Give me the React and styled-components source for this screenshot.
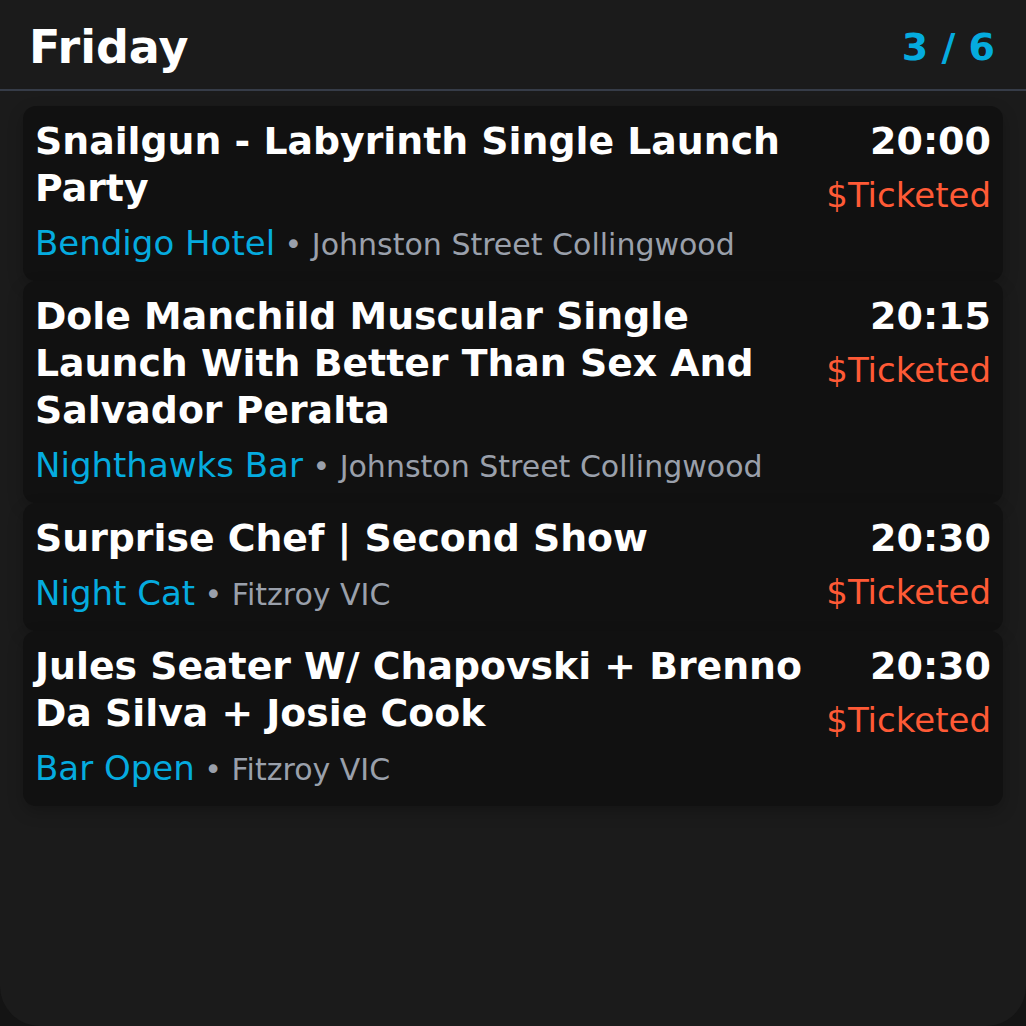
import React from "react";
import styled, { createGlobalStyle } from "styled-components";

const Global = createGlobalStyle`
  html, body { margin: 0; padding: 0; background: #141414; }
  body { font-family: "DejaVu Sans", "Liberation Sans", sans-serif; }
`;

const Screen = styled.div`
  width: 1026px;
  height: 1026px;
  box-sizing: border-box;
  background: #1b1b1b;
  border-radius: 0 0 40px 40px;
  overflow: hidden;
  display: flex;
  flex-direction: column;
`;

const Header = styled.header`
  height: 91px;
  flex-shrink: 0;
  display: flex;
  align-items: center;
  justify-content: space-between;
  padding: 4px 31px 0 29px;
  box-sizing: border-box;
  border-bottom: 2px solid #363c48;
`;

const Day = styled.h1`
  margin: 0;
  font-size: 46px;
  font-weight: 700;
  color: #ffffff;
`;

const Counter = styled.div`
  font-size: 38px;
  font-weight: 700;
  color: #05abdf;
`;

const List = styled.div`
  display: flex;
  flex-direction: column;
  padding: 15px 23px 0;
`;

const Card = styled.article`
  display: flex;
  gap: 16px;
  padding: 12px;
  background: #111111;
  border-radius: 13px;
  box-shadow: 0 6px 16px rgba(0, 0, 0, 0.22);
`;

const Main = styled.div`
  flex: 1;
  min-width: 0;
`;

const Title = styled.div`
  font-size: 37.8px;
  font-weight: 700;
  line-height: 47px;
  color: #ffffff;
`;

const Meta = styled.div`
  margin-top: 6px;
  line-height: 1.5;
  font-size: 34px;
`;

const Venue = styled.span`
  color: #05abdf;
`;

const Place = styled.span`
  font-size: 30px;
  color: #9aa0ab;
`;

const Side = styled.div`
  display: flex;
  flex-direction: column;
  align-items: flex-end;
  flex-shrink: 0;
`;

const Time = styled.div`
  font-size: 38px;
  font-weight: 700;
  line-height: 47px;
  color: #ffffff;
`;

const Price = styled.div`
  margin-top: 5px;
  font-size: 34px;
  line-height: 1.5;
  color: #ff5a36;
`;

const events = [
  {
    title: "Snailgun - Labyrinth Single Launch Party",
    venue: "Bendigo Hotel",
    place: "Johnston Street Collingwood",
    time: "20:00",
  },
  {
    title: "Dole Manchild Muscular Single Launch With Better Than Sex And Salvador Peralta",
    venue: "Nighthawks Bar",
    place: "Johnston Street Collingwood",
    time: "20:15",
  },
  {
    title: "Surprise Chef | Second Show",
    venue: "Night Cat",
    place: "Fitzroy VIC",
    time: "20:30",
  },
  {
    title: "Jules Seater W/ Chapovski + Brenno Da Silva + Josie Cook",
    venue: "Bar Open",
    place: "Fitzroy VIC",
    time: "20:30",
  },
];

export default function App() {
  return (
    <>
      <Global />
      <Screen>
        <Header>
          <Day>Friday</Day>
          <Counter>3 / 6</Counter>
        </Header>
        <List>
          {events.map((e, i) => (
            <Card key={i}>
              <Main>
                <Title>{e.title}</Title>
                <Meta>
                  <Venue>{e.venue}</Venue>
                  <Place> • {e.place}</Place>
                </Meta>
              </Main>
              <Side>
                <Time>{e.time}</Time>
                <Price>$Ticketed</Price>
              </Side>
            </Card>
          ))}
        </List>
      </Screen>
    </>
  );
}
